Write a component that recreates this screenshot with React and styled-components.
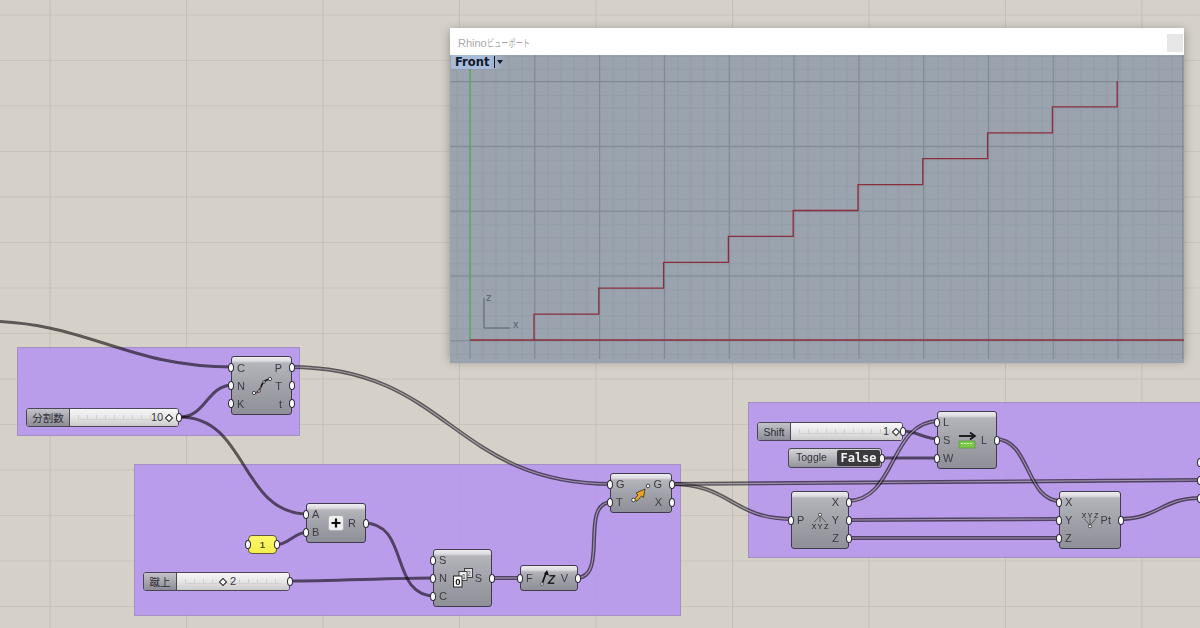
import React from 'react'
import styled, { createGlobalStyle } from 'styled-components'

const Global = createGlobalStyle`
  html, body { margin: 0; padding: 0; background: #d5d1c9; overflow: hidden; }
  body { font-family: "Liberation Sans", "Noto Sans CJK JP", sans-serif; }
`

const Canvas = styled.div`
  position: relative;
  width: 1200px;
  height: 628px;
  overflow: hidden;
  filter: blur(0.45px);
  background-color: #d5d1c9;
  background-image:
    linear-gradient(90deg, #c4c0b7 0 1px, transparent 1px),
    linear-gradient(#c8c4bc 0 1px, transparent 1px);
  background-size: 136.5px 100%, 100% 45.5px;
  background-position: 49.5px 0, 0 14.5px;
`

const Group = styled.div`
  position: absolute;
  left: ${p => p.$x}px;
  top: ${p => p.$y}px;
  width: ${p => p.$w}px;
  height: ${p => p.$h}px;
  box-sizing: border-box;
  background: rgba(180, 148, 240, 0.86);
  border: 1px solid #a48fc4;
`

const WireLayer = styled.svg`
  position: absolute;
  left: 0;
  top: 0;
`

const Outer = styled.path`
  fill: none;
  stroke: #6f6a6c;
  stroke-width: ${p => p.$w}px;
  mix-blend-mode: multiply;
`

const Inner = styled.path`
  fill: none;
  stroke: rgba(225, 215, 240, 0.55);
  stroke-width: 1.2px;
`

const Node = styled.div`
  position: absolute;
  left: ${p => p.$x}px;
  top: ${p => p.$y}px;
  width: ${p => p.$w}px;
  height: ${p => p.$h}px;
  box-sizing: border-box;
  display: flex;
  border: 1px solid #3f3b4c;
  border-radius: 3px;
  background: linear-gradient(#eeeef0 0, #dcdce0 4px, #b4b4bb 6px, #a2a2aa 50%, #8f8f98 100%);
`

const Ports = styled.div`
  flex: none;
  width: 18px;
  display: flex;
  flex-direction: column;
  justify-content: center;
  align-items: stretch;
`

const Port = styled.div`
  position: relative;
  height: 18px;
  display: flex;
  align-items: center;
  justify-content: ${p => (p.$side === 'in' ? 'flex-start' : 'flex-end')};
  padding: ${p => (p.$side === 'in' ? '0 0 0 5px' : '0 9px 0 0')};
  font-size: 11px;
  color: #3c3a44;
`

const Grip = styled.span`
  position: absolute;
  top: 50%;
  margin-top: -4.5px;
  ${p => (p.$side === 'in' ? 'left: -4px;' : 'right: -4px;')}
  width: 6px;
  height: 9px;
  box-sizing: border-box;
  background: #fff;
  border: 1.6px solid #2e2a38;
  border-radius: 50%;
`

const Glyph = styled.div`
  flex: 1;
  display: flex;
  align-items: center;
  justify-content: center;
  min-width: 0;
  svg { flex: none; overflow: visible; }
`

const Slider = styled.div`
  position: absolute;
  left: ${p => p.$x}px;
  top: ${p => p.$y}px;
  width: ${p => p.$w}px;
  height: 19px;
  box-sizing: border-box;
  display: flex;
  border: 1px solid #4a4656;
  border-radius: 3px;
  background: #ddd;
`

const SliderLabel = styled.div`
  width: ${p => p.$w}px;
  flex: none;
  display: flex;
  align-items: center;
  justify-content: center;
  font-size: 10.5px;
  color: #2e2c36;
  background: linear-gradient(#c2c2c8, #8c8c96);
  border-right: 1px solid #4a4656;
  border-radius: 2px 0 0 2px;
`

const Track = styled.div`
  position: relative;
  flex: 1;
  background: linear-gradient(#f6f6f6, #e8e8e8 45%, #cbcbcb);
  border-radius: 0 2px 2px 0;
`

const Ruler = styled.div`
  position: absolute;
  left: 8px;
  right: 8px;
  top: 6px;
  height: 4px;
  border-bottom: 1px solid #d0d0d0;
  background: repeating-linear-gradient(90deg, #d0d0d0 0 1px, transparent 1px 9px);
`

const Knob = styled.span`
  position: absolute;
  top: 6px;
  left: ${p => p.$x}px;
  width: 6px;
  height: 6px;
  box-sizing: border-box;
  background: #fff;
  border: 1.3px solid #222;
  transform: rotate(45deg);
`

const SliderValue = styled.span`
  position: absolute;
  top: 2px;
  left: ${p => p.$x}px;
  font-size: 11px;
  color: #3a3a42;
`

const Panel = styled.div`
  position: absolute;
  left: 248px;
  top: 535px;
  width: 29px;
  height: 19px;
  box-sizing: border-box;
  display: flex;
  align-items: center;
  justify-content: center;
  font-size: 9px;
  font-weight: bold;
  color: #4a4a20;
  background: linear-gradient(#fbf76a, #f5ef4e);
  border: 1px solid #5c5840;
  border-radius: 4px;
`

const ToggleBox = styled.div`
  position: absolute;
  left: 788px;
  top: 448px;
  width: 94px;
  height: 20px;
  box-sizing: border-box;
  display: flex;
  align-items: stretch;
  justify-content: space-between;
  padding: 1px 1px 1px 0;
  border: 1px solid #4a4656;
  border-radius: 3px;
  background: linear-gradient(#d6d6da, #93939c);
`

const ToggleLabel = styled.span`
  padding-left: 7px;
  font-size: 10.5px;
  line-height: 15px;
  color: #34323c;
`

const ToggleValue = styled.span`
  width: 43px;
  text-align: center;
  font-family: "DejaVu Sans Mono", monospace;
  font-weight: bold;
  font-size: 12px;
  line-height: 16px;
  color: #f2f2f2;
  background: #3b3a3e;
  border-radius: 2px;
`

const RhinoWindow = styled.div`
  position: absolute;
  left: 450px;
  top: 28px;
  width: 734px;
  height: 331px;
  display: flex;
  flex-direction: column;
  box-shadow: 0 2px 9px rgba(40, 40, 40, 0.4);
`

const TitleBar = styled.div`
  height: 27px;
  flex: none;
  display: flex;
  align-items: center;
  justify-content: space-between;
  padding: 0 1px 0 8px;
  background: #fff;
`

const TitleText = styled.span`
  font-size: 11px;
  color: #a9a9a9;
  margin-top: 1px;
`

const TitleKana = styled.span`
  display: inline-block;
  font-family: "Noto Sans CJK JP", sans-serif;
  font-size: 10.5px;
  transform: scaleX(0.68);
  transform-origin: left center;
`

const CloseBox = styled.div`
  width: 16px;
  height: 18px;
  margin-top: 3px;
  background: #e7e7e7;
`

const Viewport = styled.div`
  position: relative;
  flex: 1;
  background: #9aa3ae;
`

const ViewTab = styled.div`
  position: absolute;
  left: 1px;
  top: 0;
  width: 54px;
  height: 14px;
  display: flex;
  align-items: center;
  padding-left: 4px;
  box-sizing: border-box;
  background: linear-gradient(90deg, #a8bcd9 70%, #9aa3ae);
  font-family: "DejaVu Sans", sans-serif;
  font-weight: bold;
  font-size: 11.5px;
  color: #10182a;
`

const ViewCaret = styled.span`
  display: flex;
  align-items: center;
  height: 12px;
  margin-left: 5px;
  padding-left: 2px;
  border-left: 1px solid #10182a;
  &::after {
    content: '';
    border-top: 4px solid #10182a;
    border-left: 3px solid transparent;
    border-right: 3px solid transparent;
  }
`

const range = (from, to, step) => {
  const out = []
  for (let v = from; v <= to; v += step) out.push(v)
  return out
}

const curve = (x1, y1, x2, y2, d) => `M${x1} ${y1} C${x1 + d} ${y1} ${x2 - d} ${y2} ${x2} ${y2}`

const singleWires = [
  curve(-20, 321, 233, 367, 110),
  curve(180, 417, 233, 385, 26),
  curve(180, 417, 308, 514, 68),
  curve(275, 545, 308, 532, 14),
  curve(364, 523, 435, 596, 46),
  curve(289, 581, 435, 578, 40),
  curve(902, 431, 939, 439, 16),
  curve(882, 458, 939, 458, 10),
]

const doubleWires = [
  curve(290, 367, 612, 484, 160),
  curve(490, 578, 522, 578, 10),
  curve(576, 578, 612, 502, 34),
  curve(670, 484, 793, 519, 62),
  curve(670, 484, 1201, 480, 200),
  curve(847, 501, 939, 421, 50),
  curve(847, 520, 1061, 519, 80),
  curve(847, 538, 1061, 538, 80),
  curve(995, 439, 1061, 501, 36),
  curve(1119, 519, 1201, 498, 40),
]

const DivideIcon = () => (
  <svg width="20" height="18" viewBox="0 0 20 18">
    <path d="M2 16 C6 16 7 14 9 10 C10 6 12 3 18 2" fill="none" stroke="#1c1c1c" strokeWidth="1.6" />
    <path d="M2 16 C6 16 7 14 9 10" fill="none" stroke="#b0505a" strokeWidth="0.8" />
    <circle cx="2" cy="16" r="1.6" fill="#fff" stroke="#222" strokeWidth="0.8" />
    <circle cx="7" cy="14" r="1.3" fill="#fff" stroke="#222" strokeWidth="0.8" />
    <circle cx="12" cy="5" r="1.3" fill="#fff" stroke="#222" strokeWidth="0.8" />
    <circle cx="18" cy="2" r="1.6" fill="#fff" stroke="#222" strokeWidth="0.8" />
  </svg>
)

const PlusIcon = () => (
  <svg width="16" height="16" viewBox="0 0 16 16">
    <rect x="0.5" y="0.5" width="15" height="15" rx="2.5" fill="#f0f0f0" stroke="#b0b0b6" />
    <path d="M8 3.5V12.5M3.5 8H12.5" stroke="#111" strokeWidth="2.2" />
  </svg>
)

const SeriesIcon = () => (
  <svg width="20" height="20" viewBox="0 0 20 20">
    <rect x="11.5" y="0.5" width="8" height="9" fill="#dcdcdc" stroke="#333" strokeWidth="0.9" />
    <rect x="6" y="3.5" width="8" height="9" fill="#ececec" stroke="#333" strokeWidth="0.9" />
    <rect x="0.5" y="8" width="8.5" height="11" fill="#fff" stroke="#222" strokeWidth="1" />
    <text x="4.8" y="17" fontSize="9.5" fontFamily="Liberation Sans" fontWeight="bold" textAnchor="middle" fill="#111">0</text>
    <text x="11" y="11" fontSize="7" fontFamily="Liberation Sans" textAnchor="middle" fill="#333">1</text>
    <text x="16" y="7.5" fontSize="7" fontFamily="Liberation Sans" textAnchor="middle" fill="#555">2</text>
  </svg>
)

const UnitZIcon = () => (
  <svg width="18" height="16" viewBox="0 0 18 16">
    <path d="M2 14 L6 3" stroke="#111" strokeWidth="1.7" />
    <path d="M7 0 L9 5.5 L4 4 Z" fill="#111" />
    <circle cx="2" cy="14" r="1.4" fill="#fff" stroke="#333" strokeWidth="0.7" />
    <text x="11.5" y="14" fontSize="12" fontFamily="Liberation Sans" fontStyle="italic" fontWeight="bold" textAnchor="middle" fill="#222">Z</text>
  </svg>
)

const MoveIcon = () => (
  <svg width="20" height="20" viewBox="0 0 20 20">
    <path d="M3 17 L7 12 L5 10 L14 6 L12.5 14.5 L10.5 13 L6 18 Z" fill="#e9a62f" stroke="#3a2c10" strokeWidth="0.8" />
    <circle cx="2.5" cy="17" r="1.8" fill="#fff" stroke="#333" strokeWidth="0.9" />
    <circle cx="17" cy="3" r="1.8" fill="#fff" stroke="#333" strokeWidth="0.9" />
  </svg>
)

const ShiftIcon = () => (
  <svg width="18" height="17" viewBox="0 0 18 17">
    <path d="M1 4H15" stroke="#111" strokeWidth="1.8" />
    <path d="M12 0.5 L17 4 L12 7.5" fill="none" stroke="#111" strokeWidth="1.6" />
    <rect x="1" y="9" width="16" height="7" fill="#7bc94a" stroke="#4f8f2c" strokeWidth="0.6" />
    <path d="M3 11.5H15" stroke="#d8f5b8" strokeWidth="1" strokeDasharray="2 1" />
  </svg>
)

const TreeIcon = ({ flip }) => (
  <svg width="18" height="17" viewBox="0 0 22 20">
    {flip ? (
      <>
        <path d="M4 8L11 16M11 8V16M18 8L11 16" stroke="#444" strokeWidth="0.9" />
        <circle cx="11" cy="17" r="1.9" fill="#fff" stroke="#222" strokeWidth="0.9" />
        <text x="3.5" y="7" fontSize="9" fontFamily="Liberation Sans" textAnchor="middle" fill="#222">X</text>
        <text x="11" y="7" fontSize="9" fontFamily="Liberation Sans" textAnchor="middle" fill="#222">Y</text>
        <text x="18.5" y="7" fontSize="9" fontFamily="Liberation Sans" textAnchor="middle" fill="#222">Z</text>
      </>
    ) : (
      <>
        <path d="M11 4L4 12M11 4V12M11 4L18 12" stroke="#444" strokeWidth="0.9" />
        <circle cx="11" cy="3" r="1.9" fill="#fff" stroke="#222" strokeWidth="0.9" />
        <text x="3.5" y="20" fontSize="9" fontFamily="Liberation Sans" textAnchor="middle" fill="#222">X</text>
        <text x="11" y="20" fontSize="9" fontFamily="Liberation Sans" textAnchor="middle" fill="#222">Y</text>
        <text x="18.5" y="20" fontSize="9" fontFamily="Liberation Sans" textAnchor="middle" fill="#222">Z</text>
      </>
    )}
  </svg>
)

const components = [
  { x: 231, y: 356, w: 61, h: 59, ins: ['C', 'N', 'K'], outs: ['P', 'T', 't'], icon: <DivideIcon /> },
  { x: 306, y: 503, w: 60, h: 40, ins: ['A', 'B'], outs: ['R'], icon: <PlusIcon /> },
  { x: 433, y: 549, w: 59, h: 58, ins: ['S', 'N', 'C'], outs: ['S'], icon: <SeriesIcon /> },
  { x: 520, y: 565, w: 58, h: 26, ins: ['F'], outs: ['V'], icon: <UnitZIcon /> },
  { x: 610, y: 473, w: 62, h: 40, ins: ['G', 'T'], outs: ['G', 'X'], icon: <MoveIcon /> },
  { x: 791, y: 491, w: 58, h: 58, ins: ['P'], outs: ['X', 'Y', 'Z'], icon: <TreeIcon /> },
  { x: 937, y: 411, w: 60, h: 58, ins: ['L', 'S', 'W'], outs: ['L'], icon: <ShiftIcon /> },
  { x: 1059, y: 491, w: 62, h: 58, ins: ['X', 'Y', 'Z'], outs: ['Pt'], icon: <TreeIcon flip /> },
  { x: 1200, y: 451, w: 60, h: 58, ins: ['', '', ''], outs: [] },
]

const sliders = [
  { x: 26, y: 408, w: 153, labelW: 42, label: '分割数', value: '10', valueX: 81, knobX: 96 },
  { x: 143, y: 572, w: 147, labelW: 32, label: '蹴上', value: '2', valueX: 53, knobX: 43 },
  { x: 757, y: 422, w: 146, labelW: 32, label: 'Shift', value: '1', valueX: 92, knobX: 102 },
]

// riser then tread, last step ends on its riser
const stairs = range(0, 9, 1).map(i => {
  const x0 = 84 + i * 64.8
  const y1 = 285 - (i + 1) * 25.9
  return i === 9 ? `L${x0} ${y1}` : `L${x0} ${y1} L${x0 + 64.8} ${y1}`
})

export default function App() {
  return (
    <Canvas>
      <Global />
      <Group $x={17} $y={347} $w={283} $h={89} />
      <Group $x={134} $y={464} $w={547} $h={152} />
      <Group $x={748} $y={402} $w={460} $h={156} />

      <WireLayer width="1200" height="628" viewBox="0 0 1200 628">
        {singleWires.map(d => <Outer key={d} d={d} $w={3} />)}
        {doubleWires.map(d => (
          <g key={d}>
            <Outer d={d} $w={4} />
            <Inner d={d} />
          </g>
        ))}
      </WireLayer>

      <RhinoWindow>
        <TitleBar>
          <TitleText>Rhino<TitleKana>ビューポート</TitleKana></TitleText>
          <CloseBox />
        </TitleBar>
        <Viewport>
          <svg width="734" height="304" viewBox="0 0 734 304">
            {range(7, 734, 13).map(x => <path key={x} d={`M${x} 0V304`} stroke="#939ca7" strokeWidth="1" />)}
            {range(1.5, 304, 12.96).map(y => <path key={y} d={`M0 ${y}H734`} stroke="#949da8" strokeWidth="1" />)}
            {range(20, 734, 64.8).map(x => <path key={x} d={`M${x} 0V304`} stroke="#7f8893" strokeWidth="1" />)}
            {range(26.5, 304, 64.8).map(y => <path key={y} d={`M0 ${y}H734`} stroke="#808994" strokeWidth="1" />)}
            <path d="M20 14V285" stroke="#62a868" strokeWidth="1.6" />
            <path d="M20 285H734" stroke="#8a2e3a" strokeWidth="1.5" />
            <path d={`M84 285 ${stairs.join(' ')}`} fill="none" stroke="#8a2e3a" strokeWidth="1.3" />
            <path d="M34 243V273H60" fill="none" stroke="#59626e" strokeWidth="1" />
            <text x="36" y="246" fontSize="11" fontFamily="Liberation Sans" fill="#59626e">z</text>
            <text x="63" y="273" fontSize="11" fontFamily="Liberation Sans" fill="#59626e">x</text>
          </svg>
          <ViewTab>
            Front<ViewCaret />
          </ViewTab>
        </Viewport>
      </RhinoWindow>

      {components.map(c => (
        <Node key={`${c.x}-${c.y}`} $x={c.x} $y={c.y} $w={c.w} $h={c.h}>
          <Ports>
            {c.ins.map((name, i) => (
              <Port key={i} $side="in">
                <Grip $side="in" />
                {name}
              </Port>
            ))}
          </Ports>
          <Glyph>{c.icon}</Glyph>
          <Ports>
            {c.outs.map((name, i) => (
              <Port key={i} $side="out">
                {name}
                <Grip $side="out" />
              </Port>
            ))}
          </Ports>
        </Node>
      ))}

      {sliders.map(s => (
        <Slider key={s.label} $x={s.x} $y={s.y} $w={s.w}>
          <SliderLabel $w={s.labelW}>{s.label}</SliderLabel>
          <Track>
            <Ruler />
            <Knob $x={s.knobX} />
            <SliderValue $x={s.valueX}>{s.value}</SliderValue>
            <Grip $side="out" />
          </Track>
        </Slider>
      ))}

      <Panel>
        1
        <Grip $side="in" />
        <Grip $side="out" />
      </Panel>

      <ToggleBox>
        <ToggleLabel>Toggle</ToggleLabel>
        <ToggleValue>False</ToggleValue>
        <Grip $side="out" />
      </ToggleBox>
    </Canvas>
  )
}
